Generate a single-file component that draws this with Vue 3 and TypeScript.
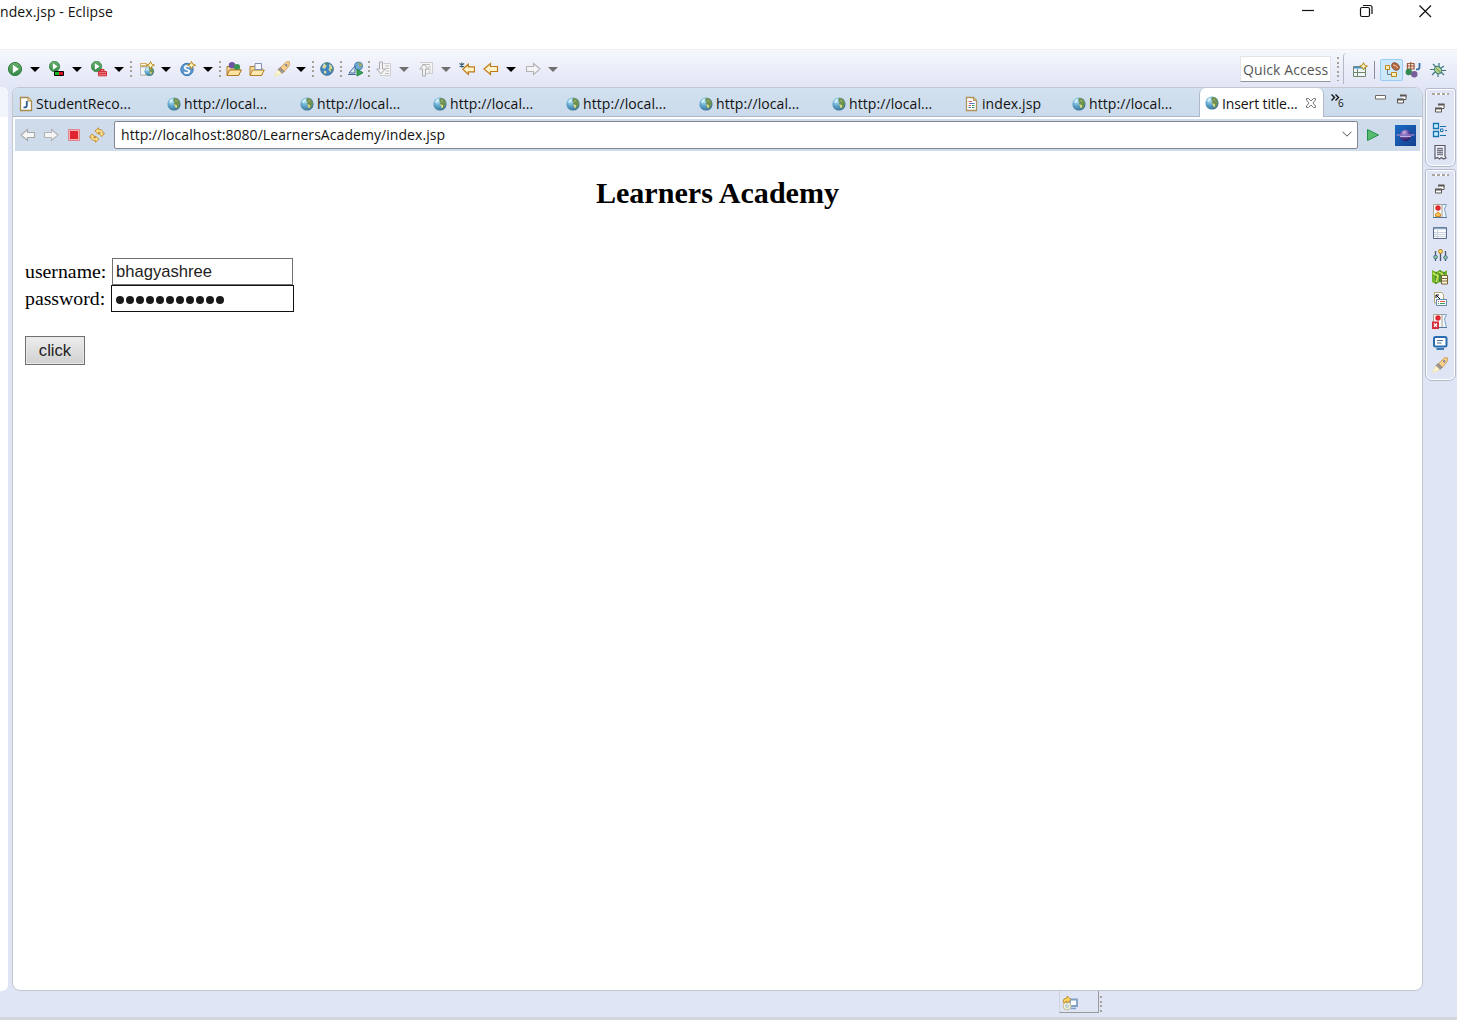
<script setup lang="ts">
import { ref } from 'vue'

interface ToolItem { kind: string; gap: number }
interface Tab { icon: string; label: string; width: number; active?: boolean }

const star = '<path d="M11.5 0.5L12.6 3L15.5 4.2L12.6 5.4L11.5 8L10.4 5.4L7.5 4.2L10.4 3Z" fill="#fff6c4" stroke="#b58a1c" stroke-width="1"/>'
const playBall = '<circle cx="5.5" cy="5.5" r="5.2" fill="url(#leaf)" stroke="#3b8a4b" stroke-width=".8"/><path d="M3.9 2.3L8.6 5.5L3.9 8.7Z" fill="#fff"/>'
const globe = '<circle cx="8" cy="8" r="6.6" fill="url(#sea)"/><path d="M8 2.2Q10.5 1.2 12.8 4L14 7L12.8 10.5L11.5 12.2L9.8 12.6L9.6 10L7.6 8.2L8.6 6.2L7.2 4.6Z" fill="#71924f"/><path d="M8.2 8L11 9.2L11 11.5L9.6 12Z" fill="#d9dc8d"/><path d="M9 3.5L11.5 5L10 6Z" fill="#a9b777"/><path d="M3.2 5.5Q4.5 2.8 7.3 2.6L6.5 5L4 7.2Z" fill="#d4f0fa"/>'
const folder = '<path d="M1 5.5H6L7.5 7H13V14H1Z" fill="#f6dc9a" stroke="#b27a2c"/><path d="M3.5 9H15.3L12.5 14.5H1Z" fill="#ffe9ae" stroke="#b27a2c"/>'
const rocket = '<path d="M12.5 .8L15.5 .8L15.3 4.5L9.8 11L5.8 7.3Z" fill="#f8cf8b" stroke="#cf9d5c" stroke-width=".9"/><path d="M6.3 6.5L10.2 10.3L8 12.6L3.8 8.8Z" fill="#a19790" stroke="#857c78" stroke-width=".8"/><path d="M10.5 3.5L13.3 6.2" stroke="#b08d68"/><path d="M4 9L7.5 12.4L.5 15.5Z" fill="#fff9d0" stroke="#f2dfa0" stroke-width=".8"/><circle cx="12.3" cy="4.2" r="1.1" fill="#7884a8"/>'
const restore = '<path d="M6.5 4.5H12V8.5H10M3.5 8.5H9.5V12H3.5Z" fill="#fff" stroke="#5b5650"/><path d="M6 4.5H12.5M3 8.5H10" stroke="#5b5650" stroke-width="2"/>'
const bp = '<path d="M2.5 1.5H14.5L12.5 6L14.5 14.5H10" fill="#eef5fc" stroke="#7fa3c6"/><path d="M1.5 1.5H10V14.5H1.5Z" fill="#f7fafc" stroke="#a8a68c"/><path d="M1 14.5H15" stroke="#54779d"/><circle cx="6" cy="5" r="2.7" fill="#df2a34"/>'

const icons: Record<string, string> = {
  run: '<circle cx="8" cy="8" r="6.6" fill="url(#leaf)" stroke="#2f803e"/><path d="M5.9 3.8L11.8 8L5.9 12.2Z" fill="#fff"/>',
  coverage: playBall + '<path d="M5.5 10.5H14.5V14.5H5.5Z" fill="#13bb24" stroke="#000"/><path d="M10 11H14V14H10Z" fill="#d8101c"/>',
  external: playBall + '<path d="M9.5 10V8.5H13V10M7.5 10.5H15.5V14.8H7.5Z" fill="#f58084" stroke="#cf2a35"/><path d="M7.5 12.5H15.5M10 11.5V13.5M13 11.5V13.5" stroke="#d2303a" stroke-width=".9"/>',
  webnew: '<path d="M1.5 5.5V14H11M1.5 5.5H8M1.5 2.5H7.5V4.5H1.5Z" fill="#fff" stroke="#d4aa54"/><path d="M1.5 6H7V14H1.5Z" fill="#f3f5f8" stroke="#b5bac4"/><g transform="translate(4.6 4.6) scale(.72)">' + globe + '</g>' + star,
  servlet: '<circle cx="7" cy="8.5" r="6.2" fill="#5c98cf" stroke="#3b79b6"/><path d="M9.6 6Q7 4 5.2 5.6T7 8.5T8.8 11.3T4.2 11.3" fill="none" stroke="#fff" stroke-width="1.8"/>' + star,
  openType: folder + '<circle cx="6" cy="4.2" r="3.2" fill="#6d55a4"/><circle cx="11" cy="6" r="3.1" fill="#3b9456"/><path d="M3.5 9H15.3L12.5 14.5H1Z" fill="#ffe3a0" stroke="#b27a2c"/>',
  openTask: folder + '<path d="M6 2.5H12.5V8.5H6Z" fill="#f5f9ff" stroke="#7e91af"/>',
  rocket,
  globe,
  browser: '<circle cx="8" cy="8" r="6.3" fill="#3f86c2" stroke="#44718f"/><path d="M3 6L5.5 3L7.5 4L7 6.5L4.8 8ZM10 3L12.5 4.5L13.5 8L11.5 11L9.5 9L10.5 6.5ZM5 9.5L7.5 10.5L7 13L5 12Z" fill="#dcd996"/><path d="M5.5 3Q7 1.5 9 2.2L8 4ZM11.5 8L13.5 8L12 11Z" fill="#558a4f"/><path d="M4 4.5L6 2.8" stroke="#d8effa"/>',
  launch: '<circle cx="10.5" cy="5" r="4" fill="#6caad9" stroke="#4f83ac"/><path d="M10 1.5L14 3L12 7Z" fill="#a7a65a"/><path d="M1 12L7 5V12ZM0 13.5H8" fill="#deebf9" stroke="#43699f"/><path d="M9 8.3L15 11.7L9 15Z" fill="#39a359" stroke="#22823d"/>',
  next: '<path d="M7.5 2.5H14.5V14.5H4" fill="#f5f5f5" stroke="#cdcdd0"/><path d="M9 5H13M9 7.5H13M10 10H13M9 12.5H13" stroke="#bdbdbe"/><path d="M3.5 1H6.5V8H9.2L5 13L.8 8H3.5Z" fill="#f3f3f5" stroke="#aaa"/>',
  prev: '<path d="M2 1.5H14.5V12.5H8" fill="#f5f5f5" stroke="#cdcdd0"/><path d="M4 3.5H12M10 6H13M10 8.5H13M10 11H13" stroke="#bdbdbe"/><path d="M4.5 15V8H1.8L6 3L10.2 8H7.5V15Z" fill="#f3f3f5" stroke="#aaa"/>',
  lastEdit: '<path d="M3.8 8.2L9.3 3.2V5.8H15.5V10.8H9.3V13.4Z" fill="#fff2c6" stroke="#bd7b19" stroke-width="1.2"/><path d="M2.8 1.5V6.5M.5 2.5L5.2 5.5M5.2 2.5L.5 5.5" stroke="#34586f" stroke-width="1.1"/>',
  back: '<path d="M1 8L7.5 2.5V5.5H14.5V10.5H7.5V13.5Z" fill="#fff2c6" stroke="#bd7b19" stroke-width="1.2"/>',
  forward: '<path d="M15 8L8.5 2.5V5.5H1.5V10.5H8.5V13.5Z" fill="#f4f4f7" stroke="#b4b4b6" stroke-width="1.1"/>',
  backOff: '<path d="M1 8L7.5 2.5V5.5H14.5V10.5H7.5V13.5Z" fill="#f6f6f4" stroke="#aaa" stroke-width="1.1"/>',
  stop: '<path d="M2.5 2.5H13.5V13.5H2.5Z" fill="#f6b2b5" stroke="#dd8589"/><path d="M4 4H12V12H4Z" fill="#e0242f"/>',
  refresh: '<path d="M6 4L9.5 .8V2.6Q13.8 2.2 14 6.2L15.6 6.2L12.8 9.6L10 6.2H11.5Q11.3 5 9.5 5.2V7.2Z" fill="#ffe08a" stroke="#c08a2e" stroke-width=".9"/><path d="M9.8 12.2L6.5 15.3V13.5Q2.2 13.8 2 10.2L.5 10.2L3.2 6.8L6 10.2H4.5Q4.8 11.4 6.5 11V9.1Z" fill="#ffe08a" stroke="#c08a2e" stroke-width=".9"/>',
  perspective: '<path d="M1.5 4.5H13.5V14.5H1.5Z" fill="#eef6fb" stroke="#73866c"/><path d="M2 5.5H13" stroke="#4a92c3" stroke-width="2"/><path d="M5.5 7V14M2 10.5H13" stroke="#73866c"/>' + star,
  javaee: '<path d="M1.5 3.5H5.5V7.5H1.5ZM7.5 10.5H12.5V14.5H7.5Z" fill="#fff0ba" stroke="#bc8519"/><path d="M3.5 7.5V12.5H7" fill="none" stroke="#627f9b"/><ellipse cx="11.5" cy="4.5" rx="3" ry="4" transform="rotate(-50 11.5 4.5)" fill="#b66f46" stroke="#885033"/><path d="M9 3Q12 3 14 6" stroke="#f0c49f" fill="none"/>',
  java: '<path d="M2.5 1.5H9V7H2.5ZM5.7 0V7M1.5 4H10" fill="#f9e9dc" stroke="#a05c40" stroke-width="1.2"/><circle cx="3.8" cy="10" r="3.2" fill="#388854"/><circle cx="9.3" cy="12.3" r="3.2" fill="#775f9c"/><path d="M14.5 1V5Q14.5 8 11 7.3" fill="none" stroke="#386ca1" stroke-width="1.8"/>',
  debug: '<path d="M3 2L6 5M9 1V5M14 4L11 6M0 7.5H4M2 13L5 10M8 11V15M11 10L14 13M12 8.5H16" stroke="#39777c" stroke-width="1.2"/><ellipse cx="8" cy="8" rx="3.2" ry="4" transform="rotate(-40 8 8)" fill="#b7d58a" stroke="#39777c"/><path d="M6 6L10.5 11" stroke="#668f52"/>',
  jfile: '<path d="M2.5 1.5H10L13.5 5V14.5H2.5Z" fill="#fff" stroke="#a88b4c" stroke-width="1.3"/><path d="M10 1.5V5H13.5" fill="#efdba2" stroke="#a88b4c"/><path d="M8.8 5V9.5Q8.8 11.8 5.5 11.3" fill="none" stroke="#285b92" stroke-width="1.8"/>',
  jsp: '<path d="M2.5 1.5H9.5L12.5 4.5V14.5H2.5Z" fill="#fff" stroke="#ae925a" stroke-width="1.3"/><path d="M9.5 1.5V4.5H12.5" fill="#e6c77f" stroke="#ae925a"/><path d="M4.5 5.5H8M4.5 9.5H7" stroke="#dd5b6c"/><path d="M5 7.5H10.5M4.5 11.5H7" stroke="#517bb8"/><path d="M8 9.5H10.5M8 11.5H10.5" stroke="#3b9464"/>',
  go: '<path d="M2.5 2.5L13.5 8L2.5 13.5Z" fill="#57bb70" stroke="#24914b"/>',
  restore,
  outline: '<path d="M1.5 1.5H6.5V6.5H1.5ZM1.5 9.5H6.5V14.5H1.5Z" fill="#c9f1ff" stroke="#1473ac" stroke-width="1.3"/><path d="M8 4.5H14M13 8.5H15M8 13.5H14" stroke="#1473ac" stroke-width="1.1"/><path d="M8.5 7H11V9.5H8.5Z" fill="#fff" stroke="#1473ac"/>',
  tasks: '<path d="M3 1.5H13V12.5L14 14L11.5 15L9.5 13.5L7.5 15L5.5 13.5L3 14.5Z" fill="#f4f5fa" stroke="#575968" stroke-width="1.2"/><path d="M5 4.5H11M5 6.5H11M5 8.5H11M5 10.5H11" stroke="#777b8b" stroke-width="1.3"/>',
  problems: bp + '<path d="M3.5 13.5V11L6 9L8.5 11V13.5Z" fill="#f9bd4f" stroke="#d28a2b"/>',
  table: '<path d="M1.5 2.5H14.5V13.5H1.5Z" fill="#fff" stroke="#566b8a"/><path d="M2 3.5H14" stroke="#8ea8c8" stroke-width="1.6"/><path d="M5.5 5V13M2 7.5H14M2 9.5H14M2 11.5H14" stroke="#c9d3e0"/>',
  sliders: '<path d="M3.5 4V14M8.5 2V14M13.5 4V14" stroke="#46566c" stroke-width="1.3"/><circle cx="3.5" cy="10" r="1.8" fill="#8dce8c" stroke="#4a70a0"/><circle cx="8.5" cy="4.5" r="2" fill="#ffe063" stroke="#b77c26"/><circle cx="13.5" cy="10.5" r="1.8" fill="#8dce8c" stroke="#4a70a0"/>',
  servers: '<path d="M0 1L4 3L8 1L12 3L15 1V13L12 15L8 13L4 15L0 13Z" fill="#73b52a"/><path d="M4 3V15M8 1V13M12 3V15" stroke="#246838"/><path d="M1 4L6 7L4 13M7 3L13 7" stroke="#d1e95c" stroke-width="1.5" fill="none"/><path d="M9.5 6.5H15.5V15H9.5Z" fill="#fff8d9" stroke="#766337"/><path d="M10 9.5H15M10 12H15" stroke="#766337"/>',
  snippets: '<path d="M2.5 1.5H10L11.5 4V12H2.5Z" fill="#fff" stroke="#b5a573"/><path d="M4 4L8 8M4 4V7M4 4H7" stroke="#111" fill="none"/><path d="M4.5 8.5H14.5V14.5H4.5Z" fill="#fff" stroke="#5d8ab0"/><path d="M6 10.5H7M8 10.5H13" stroke="#d55"/><path d="M6 12.5H7M8 12.5H13" stroke="#3a9a60"/>',
  errors: bp + '<path d="M0 8.5H7V16H0Z" fill="#d92d3b"/><path d="M2 10.5L5 13.8M5 10.5L2 13.8" stroke="#fff" stroke-width="1.3"/>',
  console: '<rect x="2" y="2" width="12.5" height="9.5" rx="1.5" fill="#fff" stroke="#286caf" stroke-width="2"/><path d="M5 5.5H11M5 8H9.5" stroke="#49698e"/><path d="M4.5 14H12" stroke="#286caf" stroke-width="1.8"/>',
  update: '<path d="M8 4.5H15V11H8Z" fill="#fff" stroke="#7f9fc6" stroke-width="1.8"/><path d="M9 13.5H14" stroke="#7f9fc6" stroke-width="1.6"/><circle cx="5" cy="11" r="4" fill="#e9efdb" stroke="#c4bf98"/><circle cx="5" cy="11" r="1.3" fill="#fff" stroke="#9db6c8"/><path d="M1 7Q1 3 5 3V1L9 4.5L5 8V6Q3 6 3 8Z" fill="#ffd75d" stroke="#c49036"/>',
}

const tools: ToolItem[] = ([
  ['run', 7], ['caret', 7], ['coverage', 9], ['caret', 7], ['external', 9], ['caret', 7], ['sep', 6],
  ['webnew', 7], ['caret', 6], ['servlet', 9], ['caret', 7], ['sep', 6],
  ['openType', 5], ['openTask', 7], ['rocket', 9], ['caret', 6], ['sep', 6],
  ['browser', 5], ['sep', 5], ['launch', 6], ['sep', 4],
  ['next', 6], ['caret off', 7], ['prev', 9], ['caret off', 7], ['lastEdit', 8],
  ['back', 8], ['caret', 7], ['forward', 9], ['caret off', 7],
] as [string, number][]).map(([kind, gap]) => ({ kind, gap }))

const tabs: Tab[] = [
  { icon: 'jfile', label: 'StudentReco...', width: 148 },
  ...Array.from({ length: 6 }, () => ({ icon: 'globe', label: 'http://local...', width: 133 })),
  { icon: 'jsp', label: 'index.jsp', width: 107 },
  { icon: 'globe', label: 'http://local...', width: 133 },
  { icon: 'globe', label: 'Insert title...', width: 125, active: true },
]

const editorViews = ['outline', 'tasks']
const bottomViews = ['problems', 'table', 'sliders', 'servers', 'snippets', 'errors', 'console', 'rocket']

const url = ref('http://localhost:8080/LearnersAcademy/index.jsp')
const username = ref('bhagyashree')
const password = ref('learners123')
</script>

<template>
  <div class="window">
    <svg class="defs" width="0" height="0">
      <defs>
        <radialGradient id="sea" cx="35%" cy="30%" r="75%">
          <stop offset="0" stop-color="#b5e2f4" /><stop offset=".5" stop-color="#5ba3cb" /><stop offset="1" stop-color="#3b6f90" />
        </radialGradient>
        <linearGradient id="leaf" x1="0" y1="0" x2="0" y2="1">
          <stop offset="0" stop-color="#69ad6c" /><stop offset="1" stop-color="#368b48" />
        </linearGradient>
        <radialGradient id="orb" cx="40%" cy="25%" r="75%">
          <stop offset="0" stop-color="#c9b3ea" /><stop offset=".5" stop-color="#5f459c" /><stop offset="1" stop-color="#2a1c62" />
        </radialGradient>
        <linearGradient id="sky" x1="0" y1="0" x2="1" y2="1">
          <stop offset="0" stop-color="#1a6cc4" /><stop offset="1" stop-color="#153f90" />
        </linearGradient>
      </defs>
    </svg>

    <header class="titlebar">
      <span class="title">ndex.jsp - Eclipse</span>
      <svg class="winctl" width="130" height="22" viewBox="0 0 130 22" fill="none" stroke="#111" stroke-width="1.2">
        <path d="M0 10.5H12" />
        <rect x="58.5" y="7.5" width="9" height="9" rx="1.5" />
        <path d="M61 5.5H68Q70 5.5 70 7.5V14" />
        <path d="M117.5 5.5L129 17M129 5.5L117.5 17" />
      </svg>
    </header>

    <div class="toolbar">
      <template v-for="(t, i) in tools" :key="i">
        <i v-if="t.kind.startsWith('caret')" :class="t.kind" :style="{ marginLeft: t.gap + 'px' }"></i>
        <i v-else-if="t.kind === 'sep'" class="sep" :style="{ marginLeft: t.gap + 'px' }"></i>
        <svg v-else class="icon" viewBox="0 0 16 16" :style="{ marginLeft: t.gap + 'px' }" v-html="icons[t.kind]"></svg>
      </template>
      <div class="quick">Quick Access</div>
      <i class="sep tall"></i>
      <div class="persp">
        <svg class="icon" viewBox="0 0 16 16" v-html="icons.perspective"></svg>
        <i class="rule"></i>
        <span class="on"><svg class="icon" viewBox="0 0 16 16" v-html="icons.javaee"></svg></span>
        <svg class="icon java" viewBox="0 0 16 16" v-html="icons.java"></svg>
        <svg class="icon bug" viewBox="0 0 16 16" v-html="icons.debug"></svg>
      </div>
    </div>

    <main class="body">
      <div class="sliver"><div class="sliver-head"></div></div>

      <section class="editor">
        <div class="tabs">
          <div v-for="(t, i) in tabs" :key="i" class="tab" :class="{ active: t.active }" :style="{ width: t.width + 'px' }">
            <svg class="icon" viewBox="0 0 16 16" v-html="icons[t.icon]"></svg>
            <span class="label">{{ t.label }}</span>
            <svg v-if="t.active" class="close" width="12" height="12" viewBox="0 0 12 12">
              <path d="M1.5 1.5H3.5L6 4L8.5 1.5H10.5V3L8 6L10.5 9V10.5H8.5L6 8L3.5 10.5H1.5V9L4 6L1.5 3Z" fill="#fff" stroke="#77777c" />
            </svg>
          </div>
          <div class="more">
            <svg width="9" height="7" viewBox="0 0 9 7" fill="none" stroke="#111" stroke-width="1.4"><path d="M.5 .5L3.5 3.5L.5 6.5M4.5 .5L7.5 3.5L4.5 6.5" /></svg>
            <span>6</span>
          </div>
          <div class="tabctl">
            <svg width="11" height="5" viewBox="0 0 11 5"><path d="M.5 .5H10.5V4H.5Z" fill="#fff" stroke="#6d6862" /></svg>
            <svg class="icon" viewBox="0 0 16 16" v-html="icons.restore"></svg>
          </div>
        </div>

        <div class="address">
          <svg class="icon" viewBox="0 0 16 16" v-html="icons.backOff"></svg>
          <svg class="icon" viewBox="0 0 16 16" v-html="icons.forward"></svg>
          <svg class="icon" viewBox="0 0 16 16" v-html="icons.stop"></svg>
          <svg class="icon" viewBox="0 0 16 16" v-html="icons.refresh"></svg>
          <div class="url">
            <span>{{ url }}</span>
            <svg width="10" height="6" viewBox="0 0 10 6" fill="none" stroke="#555"><path d="M.5 .7L5 5.2L9.5 .7" /></svg>
          </div>
          <svg class="icon go" viewBox="0 0 16 16" v-html="icons.go"></svg>
          <svg class="logo" width="21" height="21" viewBox="0 0 21 21">
            <rect width="21" height="21" fill="url(#sky)" />
            <circle cx="10.5" cy="10.5" r="5.8" fill="url(#orb)" />
            <path d="M1.5 10H19.5" stroke="#8d7cc4" stroke-width="1.3" />
            <path d="M5 11.6H16" stroke="#d9cdf0" stroke-width=".9" />
          </svg>
        </div>

        <form class="page" @submit.prevent>
          <h2>Learners Academy</h2>
          <div class="field"><label for="user">username:</label><input id="user" v-model="username" type="text" /></div>
          <div class="field pw"><label for="pass">password:</label>
            <div class="secret"><i v-for="n in password.length" :key="n"></i></div>
          </div>
          <button type="submit">click</button>
        </form>
      </section>

      <aside class="trim">
        <div class="stack first">
          <i class="grip"></i>
          <svg class="icon" viewBox="0 0 16 16" v-html="icons.restore"></svg>
          <svg v-for="v in editorViews" :key="v" class="icon" viewBox="0 0 16 16" v-html="icons[v]"></svg>
        </div>
        <div class="stack second">
          <i class="grip"></i>
          <svg class="icon" viewBox="0 0 16 16" v-html="icons.restore"></svg>
          <svg v-for="v in bottomViews" :key="v" class="icon" viewBox="0 0 16 16" v-html="icons[v]"></svg>
        </div>
      </aside>
    </main>

    <footer class="status">
      <div class="updater"><svg class="icon" viewBox="0 0 16 16" v-html="icons.update"></svg></div>
      <i class="sep"></i>
    </footer>
  </div>
</template>

<style>
html, body { margin: 0; overflow: hidden; }
</style>

<style scoped>
* { box-sizing: border-box; }
.window { width: 1457px; height: 1020px; display: flex; flex-direction: column; background: #dfe5f5; font: 14px "Open Sans", "Noto Sans", sans-serif; color: #111; overflow: hidden; }
.defs { position: absolute; }
.icon { width: 16px; height: 16px; flex: none; display: block; }
.titlebar { height: 50px; flex: none; display: flex; justify-content: space-between; background: #fff; border-bottom: 1px solid #f0f0f0; }
.title { line-height: 24px; letter-spacing: 0.1px; white-space: nowrap; }
.winctl { margin-right: 25px; }
.toolbar { height: 37px; flex: none; display: flex; align-items: center; background: linear-gradient(#f6f8fe, #e1e5f5); }
.caret { width: 10px; height: 5px; background: #000; clip-path: polygon(0 0, 100% 0, 50% 100%); flex: none; margin-top: 2px; }
.caret.off { background: #707070; }
.sep { width: 2px; height: 16px; flex: none; background: repeating-linear-gradient(#a6a296 0 2px, transparent 2px 4.6px); }
.quick { margin-left: auto; width: 91px; height: 26px; background: #fff; border: 1px solid #e3e3e8; border-bottom-color: #92949c; color: #555; line-height: 25px; padding-left: 2px; letter-spacing: 0.1px; white-space: nowrap; }
.sep.tall { height: 24px; margin-left: 6px; }
.persp { display: flex; align-items: center; margin-left: 4px; width: 114px; height: 31px; border-left: 1px solid #b5b8c8; border-top-left-radius: 4px; padding: 2px 0 0 8px; }
.rule { width: 1px; height: 18px; background: #8b8d96; margin: 0 5px 0 6px; }
.on { width: 23px; height: 22px; border: 1px solid #98cdf5; background: #cde7fb; border-radius: 2px; display: flex; align-items: center; justify-content: center; }
.java { margin-left: 2px; }
.bug { margin-left: 9px; }
.body { height: 904px; flex: none; display: flex; }
.sliver { width: 8px; background: #fff; border-radius: 0 6px 6px 0; overflow: hidden; }
.sliver-head { height: 30px; background: #f3f5fc; }
.editor { margin-left: 4px; width: 1411px; display: flex; flex-direction: column; background: #fff; border: 1px solid #c4c6ce; border-radius: 7px 9px 8px 8px; overflow: hidden; }
.tabs { height: 29px; flex: none; display: flex; background: linear-gradient(#d2e0ef, #cbdbeb); border-bottom: 1px solid #adb6cb; }
.tab { display: flex; align-items: center; padding-left: 5px; flex: none; white-space: nowrap; padding-top: 3px; }
.label { margin-left: 2px; letter-spacing: 0.08px; }
.tab.active { background: #fff; height: 29px; border: 1px solid #b2b8cb; border-width: 0 1px; border-radius: 6px 6px 0 0; padding: 2px 0 1px 4px; }
.active .label { letter-spacing: -0.12px; }
.close { margin-left: 7px; }
.more { display: flex; margin: 6px 0 0 7px; font-size: 10px; line-height: 13px; }
.more span { margin: 3px 0 0 -2px; }
.tabctl { display: flex; margin-left: auto; padding: 7px 12px 0 0; gap: 8px; }
.tabctl .icon { margin-top: -4px; }
.address { height: 32px; flex: none; margin: 2px 2px 0; background: #cddbeb; display: flex; align-items: center; gap: 7px; padding: 0 4px 0 5px; }
.url { width: 1244px; height: 28px; margin-left: 2px; flex: none; background: #fff; border: 1px solid #838790; border-radius: 2px; display: flex; align-items: center; justify-content: space-between; padding: 0 5px 2px 6px; letter-spacing: 0.06px; }
.logo { margin-left: auto; flex: none; }
.page { flex: 1; padding: 0 12px; font: 19.8px "Liberation Serif", serif; color: #000; }
h2 { margin: 25px 0 47px; height: 35px; line-height: 35px; font-size: 30.1px; text-align: center; }
.field { height: 27px; display: flex; align-items: center; }
.field label { width: 87px; line-height: 24px; padding-bottom: 2px; }
.field input { width: 181px; height: 27px; border: 1px solid #707070; padding: 1px 3px; font: 16.6px "Liberation Sans", Arial, sans-serif; color: #222; outline: none; }
.pw label { width: 86px; }
.secret { width: 183px; height: 27px; border: 1px solid #111; display: flex; align-items: center; gap: 2px; padding: 3px 0 0 4px; }
.secret i { width: 8px; height: 8px; border-radius: 50%; background: #1a1a1a; }
button { display: block; margin-top: 24px; width: 60px; height: 29px; padding: 0; border: 1px solid #707070; background: linear-gradient(#ededed, #d0d0d0); font: 16.6px "Liberation Sans", Arial, sans-serif; color: #222; box-shadow: inset 0 0 0 1px #e8e8e8; }
.trim { width: 31px; margin-left: 2px; display: flex; flex-direction: column; gap: 2px; padding-top: 1px; }
.stack { display: flex; flex-direction: column; align-items: center; border: 1px solid #b6b9cc; border-radius: 3px 3px 7px 7px; box-shadow: inset 0 0 0 1px #fff; padding: 4px 1px 0 0; gap: 6px; }
.first { height: 79px; }
.second { height: 212px; }
.grip { width: 17px; height: 2px; background: repeating-linear-gradient(90deg, #aaa69c 0 3px, #fff 3px 5px); margin-bottom: -1px; flex: none; }
.status { flex: 1; display: flex; border-bottom: 3px solid #d5d6d9; }
.updater { margin-left: 1059px; width: 40px; height: 22px; border: 1px solid #999; border-width: 0 1px 1px 0; border-left: 1px solid #d0d3df; padding: 4px 0 0 2px; }
.status .sep { margin: 5px 0 0 1px; height: 16px; }
</style>
